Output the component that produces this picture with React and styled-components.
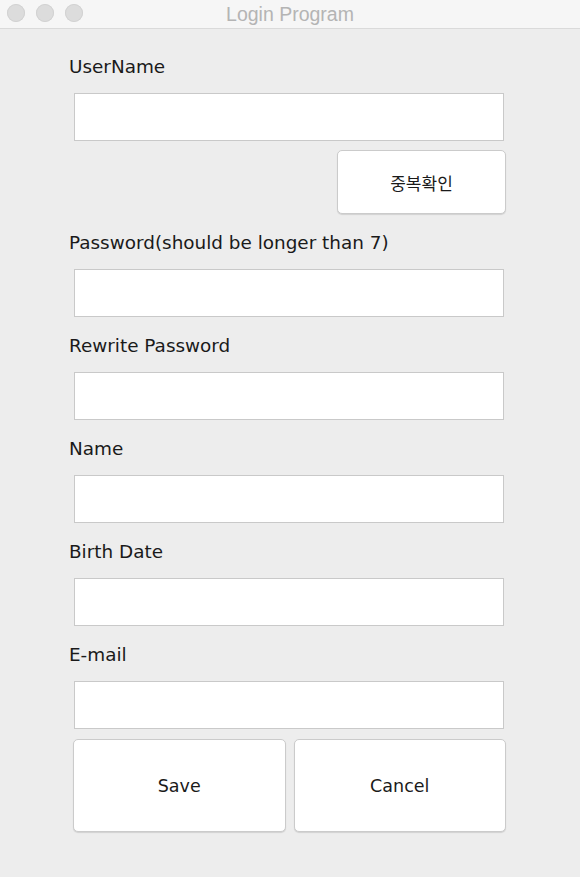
import styled, { createGlobalStyle } from "styled-components";

const GlobalStyle = createGlobalStyle`
    html, body {
        margin: 0;
        padding: 0;
        background: #ededed;
    }
    body {
        font-family: "DejaVu Sans", "Noto Sans CJK KR", sans-serif;
    }
`

const fields = [
    { label: "UserName", check: true },
    { label: "Password(should be longer than 7)" },
    { label: "Rewrite Password" },
    { label: "Name" },
    { label: "Birth Date" },
    { label: "E-mail" },
]

export default function App(){
    return(
        <Window>
            <GlobalStyle/>
            <TitleBar>
                <Lights>
                    <Light/>
                    <Light/>
                    <Light/>
                </Lights>
                <Title>Login Program</Title>
            </TitleBar>
            <Form>
                <Fields>
                    {fields.map((f) => (
                        <Field key={f.label}>
                            <Label>{f.label}</Label>
                            <InputGroup>
                                <Input type={f.label.includes("Password") ? "password" : "text"}/>
                                {f.check && <CheckButton>중복확인</CheckButton>}
                            </InputGroup>
                        </Field>
                    ))}
                </Fields>
                <Footer>
                    <Button>Save</Button>
                    <Button>Cancel</Button>
                </Footer>
            </Form>
        </Window>
    )
}

const Window = styled.div`
    width: 580px;
    min-height: 877px;
    background: #ededed;
`

const TitleBar = styled.header`
    position: relative;
    height: 28px;
    background: #f6f6f6;
    border-bottom: 1px solid #dadada;
    display: flex;
    align-items: center;
    justify-content: center;
`

const Lights = styled.div`
    position: absolute;
    left: 7px;
    top: 4px;
    display: flex;
    gap: 11px;
`

const Light = styled.span`
    width: 18px;
    height: 18px;
    border-radius: 50%;
    background: #dcdcdc;
    box-shadow: inset 0 0 0 1px #d2d2d2;
`

const Title = styled.h1`
    margin: 0;
    font-family: "Liberation Sans", "Noto Sans", sans-serif;
    font-weight: 400;
    font-size: 19.5px;
    color: #b4b4b4;
`

const Form = styled.main`
    padding: 27px 0 0 69px;
    display: flex;
    flex-direction: column;
`

const Fields = styled.div`
    display: flex;
    flex-direction: column;
    gap: 18px;
`

const Field = styled.section`
    display: flex;
    flex-direction: column;
    gap: 15px;
`

const Label = styled.label`
    font-size: 18.4px;
    line-height: 22px;
    color: #1a1a1a;
`

const InputGroup = styled.div`
    display: flex;
    flex-direction: column;
    align-items: flex-end;
    gap: 9px;
    width: 437px;
`

const Input = styled.input`
    align-self: flex-start;
    box-sizing: border-box;
    margin: 0 0 0 5px;
    width: 430px;
    height: 48px;
    border: 1px solid #c9c9c9;
    background: #ffffff;
    outline: none;
`

const Button = styled.button`
    box-sizing: border-box;
    flex: 1;
    height: 93px;
    background: #ffffff;
    border: 1px solid #cbcbcb;
    border-radius: 5px;
    box-shadow: 0 1px 1px rgba(0, 0, 0, 0.12);
    font-family: "DejaVu Sans", "Noto Sans CJK KR", sans-serif;
    font-size: 17.5px;
    color: #1a1a1a;
`

const CheckButton = styled(Button)`
    flex: none;
    width: 169px;
    height: 64px;
    font-family: "Noto Sans CJK KR", sans-serif;
    font-size: 17px;
`

const Footer = styled.div`
    margin: 10px 0 0 4px;
    width: 433px;
    display: flex;
    gap: 8px;
`
